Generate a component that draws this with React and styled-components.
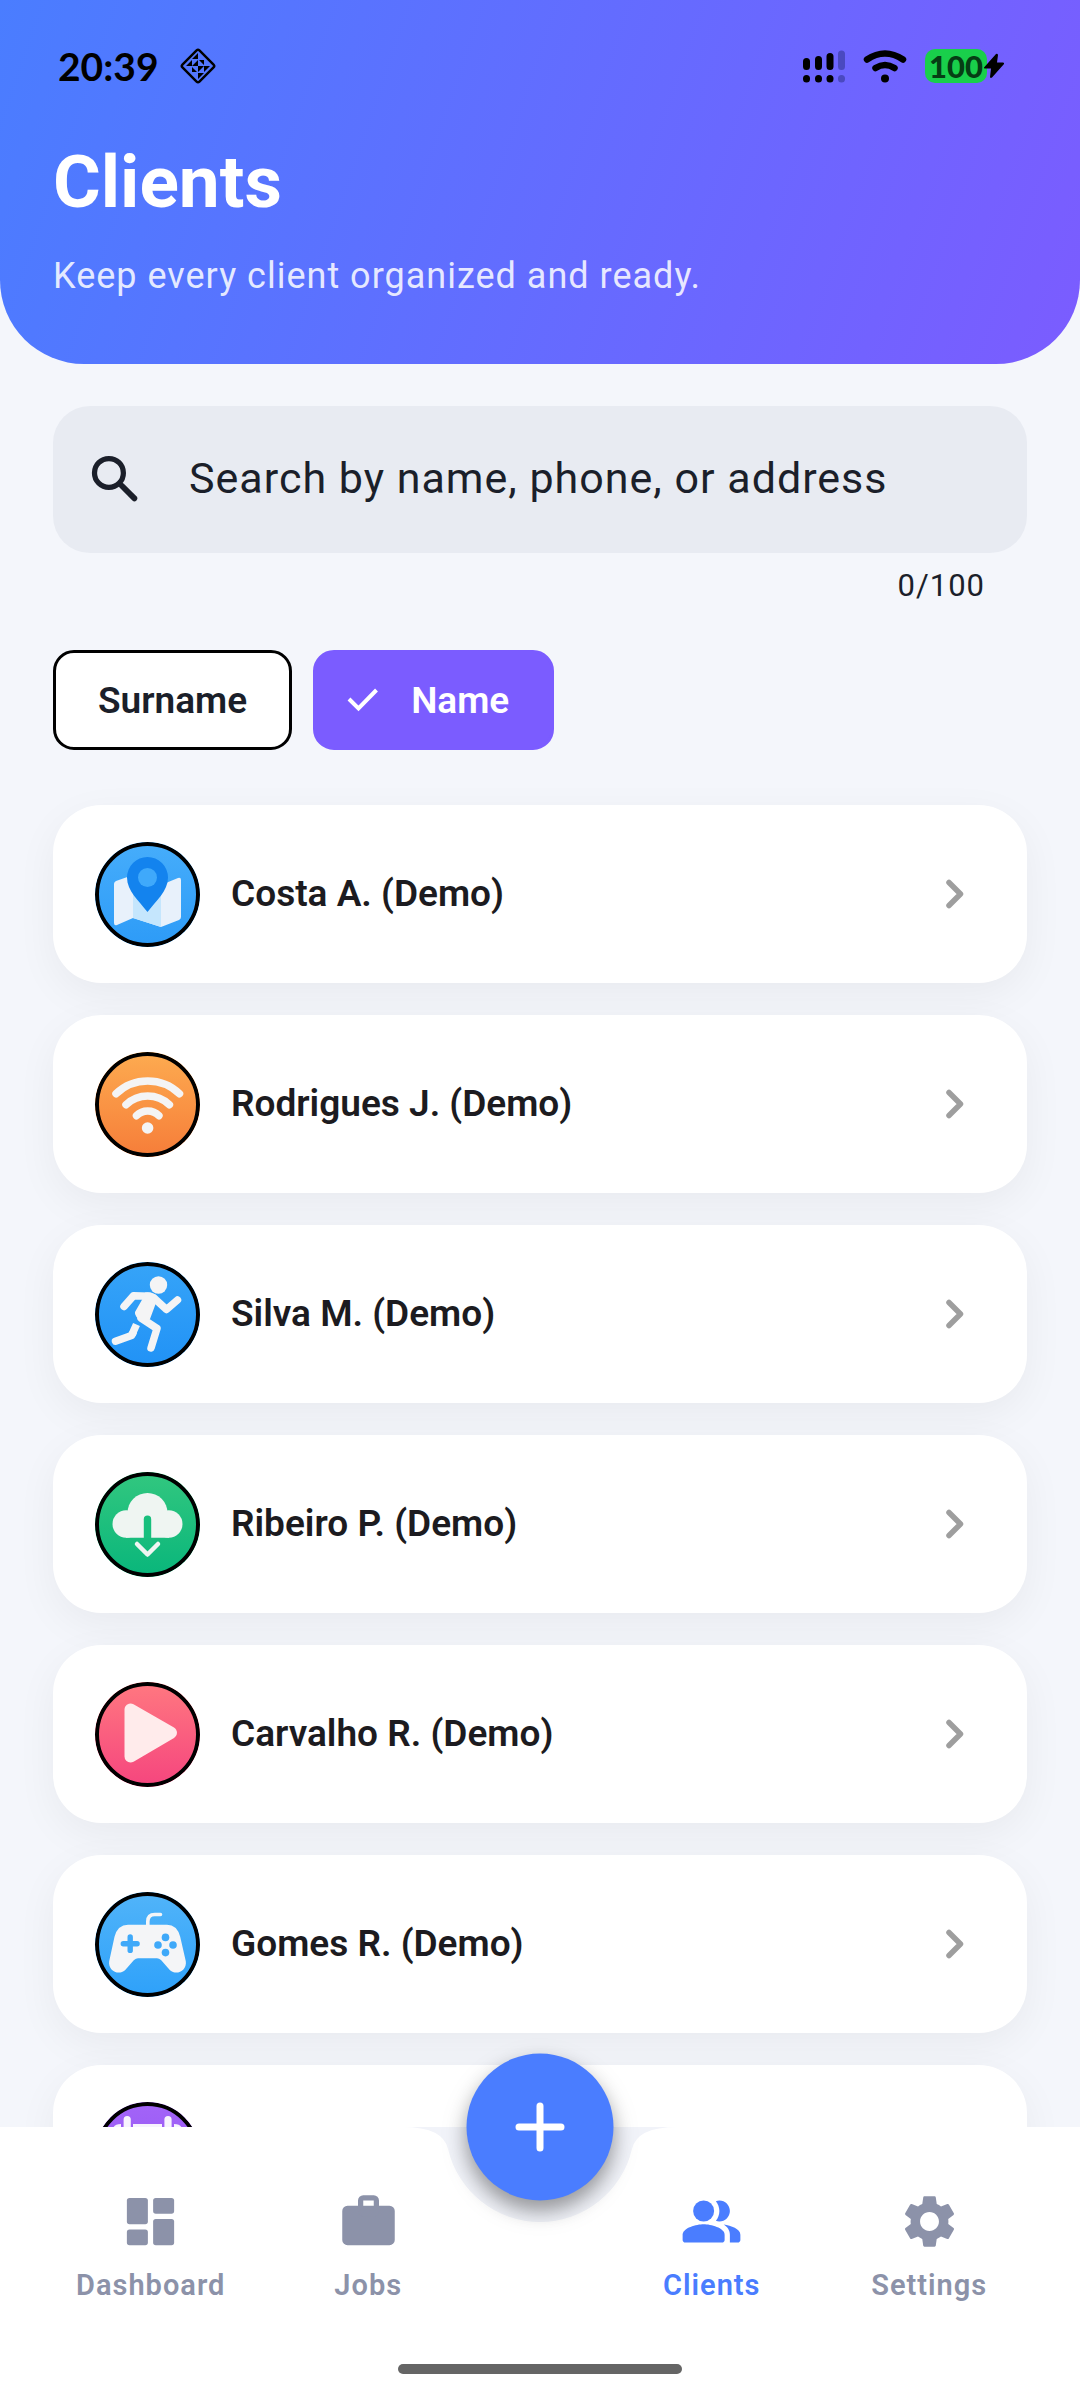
import React, { useState } from 'react'
import styled, { createGlobalStyle } from 'styled-components'
import { MdSettings } from 'react-icons/md'

const clients = [
    { id: 1, name: 'Costa A. (Demo)', icon: 'map', from: '#46adfb', to: '#2d9bf7' },
    { id: 2, name: 'Rodrigues J. (Demo)', icon: 'wifi', from: '#fdab50', to: '#f67d39' },
    { id: 3, name: 'Silva M. (Demo)', icon: 'runner', from: '#36a4f8', to: '#2192f6' },
    { id: 4, name: 'Ribeiro P. (Demo)', icon: 'cloud', from: '#32c77f', to: '#09b67b' },
    { id: 5, name: 'Carvalho R. (Demo)', icon: 'play', from: '#ff7880', to: '#f5457e' },
    { id: 6, name: 'Gomes R. (Demo)', icon: 'gamepad', from: '#51b4f9', to: '#2ea1fa' },
    { id: 7, name: '', icon: 'calendar', from: '#a364f8', to: '#8f50f0' },
]

// All avatar glyphs share a 105 x 105 grid
const glyphs = {
    map: (
        <>
            <path fill="#e8f1fb" d="M38 33 21 39q-2 1-2 3v39q0 3 3 2l16-7 28 9 18-7q2-1 2-3V38q0-3-3-2l-17 7z" />
            <path fill="#c5e6fd" d="M38 40h28v45l-28-9z" />
            <path fill="#1383ee" d="M52.500 15a20.500 20.500 0 0 0-20.500 20.500C32 49 44 59 52.500 70 61 59 73 49 73 35.500A20.500 20.500 0 0 0 52.500 15z" />
            <circle cx="52.500" cy="35.500" r="9.500" fill="#3fa9fb" />
        </>
    ),
    wifi: (
        <>
            <g fill="none" stroke="#f4f4f5" strokeWidth="7.500" strokeLinecap="round">
                <path d="M21 41.700a46 46 0 0 1 63.500 0" />
                <path d="M31 52.700a31.400 31.400 0 0 1 43.400 0" />
                <path d="M41.500 63.700a15.500 15.500 0 0 1 22.400 0" />
            </g>
            <circle cx="52.600" cy="76" r="5.800" fill="#f4f4f5" />
        </>
    ),
    runner: (
        <>
            <circle cx="63.500" cy="23" r="8.700" fill="#f4f4f5" />
            <g fill="none" stroke="#f4f4f5" strokeWidth="7.500" strokeLinejoin="round">
                <path strokeLinecap="round" d="M29 44.500 38.500 33.700 54 34.200M59 36l12.500 11.500L82.500 38" />
                <path strokeLinecap="round" d="M46 56l16 10.500L56 86" />
                <path d="M41.500 62.500 37 72.500" />
                <path strokeLinecap="round" d="M20.500 79.200 36.500 73.500 38 71" />
            </g>
            <path fill="#f4f4f5" d="M50 30.500q9-1 13 5L55 57l-8 1q-8-3-7-8l8-14z" />
        </>
    ),
    cloud: (
        <>
            <g fill="#eff5f2">
                <circle cx="31.200" cy="52" r="13.700" />
                <circle cx="73.800" cy="52" r="13.700" />
                <circle cx="52.500" cy="41" r="20" />
                <path d="M31 40h43v25.700H31z" />
            </g>
            <path fill="#18bf7d" d="M48.800 66V47.200a3.700 3.700 0 0 1 7.400 0V66z" />
            <path fill="none" stroke="#eff5f2" strokeWidth="4.500" strokeLinecap="round" strokeLinejoin="round" d="m42 72 10.500 10.500L63 72" />
        </>
    ),
    play: (
        <path fill="#ffebeb" stroke="#ffebeb" strokeWidth="12" strokeLinejoin="round" d="M35.500 27.500v47l40.500-23.700z" />
    ),
    gamepad: (
        <>
            <path fill="none" stroke="#f4f5f7" strokeWidth="3.600" strokeLinecap="round" d="M52.800 34v-4.500q0-7 7-7h5.700" />
            <path fill="#f4f5f7" d="M33 32.700h39q10 0 13.200 12l5.600 24.500c1.400 9-9 15-15.800 9L66 68q-2-1.700-4-1.700H43q-2 0-4 1.700l-9 10.200c-6.800 6-17.200 0-15.800-9L19.500 44.700q3.200-12 13.500-12z" />
            <path fill="none" stroke="#3fa9f9" strokeWidth="5.400" strokeLinecap="round" d="M35.200 45v13.400M28.300 51.700h13.800" />
            <g fill="#3fa9f9">
                <circle cx="70.500" cy="45.400" r="3.800" />
                <circle cx="63" cy="53" r="3.800" />
                <circle cx="78" cy="53" r="3.800" />
                <circle cx="70.500" cy="60.600" r="3.800" />
            </g>
        </>
    ),
    calendar: (
        <>
            <path fill="#f7f3fd" d="M18 28q0-6 8-6v14q6 6 12 0V22h29v14q6 6 12 0V22q8 0 8 6v52q0 6-6 6H24q-6 0-6-6z" />
            <path fill="none" stroke="#f7f3fd" strokeWidth="7.200" strokeLinecap="round" d="M32.200 17.500V32M73 17.500V32" />
        </>
    ),
}

const SearchIcon = () => (
    <svg width="63" height="63" viewBox="0 0 24 24" fill="none" stroke="#1b1f2a" strokeWidth="2" aria-hidden="true">
        <circle cx="9.500" cy="9.500" r="5.500" />
        <path d="m14.400 14.400 4.800 4.800" strokeLinecap="round" strokeWidth="2.200" />
    </svg>
)

const DashboardIcon = () => (
    <svg width="63" height="63" viewBox="0 0 24 24" fill="currentColor" aria-hidden="true">
        <rect x="3" y="3" width="8" height="10" rx="1" />
        <rect x="3" y="15" width="8" height="6" rx="1" />
        <rect x="13" y="3" width="8" height="6" rx="1" />
        <rect x="13" y="11" width="8" height="10" rx="1" />
    </svg>
)

const JobsIcon = () => (
    <svg width="63" height="63" viewBox="0 0 24 24" fill="currentColor" aria-hidden="true">
        <rect x="2" y="6" width="20" height="15" rx="2" />
        <rect x="9" y="3" width="6" height="6" rx="1" fill="none" stroke="currentColor" strokeWidth="2" />
    </svg>
)

const PeopleIcon = () => (
    <svg width="63" height="63" viewBox="0 0 24 24" fill="currentColor" aria-hidden="true">
        <circle cx="9" cy="8" r="4" />
        <path d="M9 13c-2.670 0-8 1.340-8 4v2c0 .55.45 1 1 1h14c.55 0 1-.45 1-1v-2c0-2.660-5.330-4-8-4z" />
        <path d="M15 12c2.210 0 4-1.790 4-4s-1.790-4-4-4c-.47 0-.91.1-1.330.24C14.500 5.270 15 6.580 15 8s-.5 2.730-1.330 3.760c.42.14.86.24 1.330.24z" />
        <path d="M16.670 13.130C18.040 14.060 19 15.320 19 17v3h3c.55 0 1-.45 1-1v-2c0-2.180-3.570-3.470-6.330-3.870z" />
    </svg>
)

const tabs = [
    { label: 'Dashboard', icon: <DashboardIcon /> },
    { label: 'Jobs', icon: <JobsIcon /> },
    { label: 'Clients', icon: <PeopleIcon />, active: true },
    { label: 'Settings', icon: <MdSettings size={63} aria-hidden="true" /> },
]

const StatusBar = () => (
    <StatusRow>
        <Clock>20:39</Clock>
        <svg width="38" height="38" viewBox="-19 -19 38 38" aria-hidden="true">
            <rect x="-12" y="-12" width="24" height="24" rx="2" transform="rotate(45)" fill="none" stroke="#000" strokeWidth="2.400" />
            <path d="M0-13v6h-6zM-12 0l6-6v6zM0 0h-6l6-6zM1-6h5v5zM0 13V7h6zM12 0 6 6V0zM0 0h6L0 6zM-1 6h-5V1z" />
        </svg>
        <StatusIcons>
            <svg width="42" height="33" viewBox="0 0 42 33" strokeWidth="7" strokeLinecap="round" stroke="#000" aria-hidden="true">
                <path d="M3.500 11.500v5M15.500 9.500v7M27 6.500v10M3.500 28.500v.5M15.500 28.500v.5M27 28.500v.5" />
                <path stroke="#4a49c0" d="M38.500 4v12.500M38.500 28.500v.5" />
            </svg>
            <svg width="44" height="33" viewBox="0 0 44 33" strokeLinecap="round" fill="none" stroke="#000" strokeWidth="6.500" aria-hidden="true">
                <path d="M4 9.500q18-12 36 0M12.500 18q9.500-6 19 0" />
                <circle cx="22" cy="28.500" r="4" fill="#000" stroke="none" />
            </svg>
            <Battery>
                <BatteryLevel>100</BatteryLevel>
                <svg width="22" height="26" viewBox="0 0 22 26" aria-hidden="true">
                    <path d="M13 1 1 14.500q-.5 1 1 1h6L7 24q.5 1.500 2 .5l12-13.500q.5-1.500-1-1.500h-6L15 2q-.5-2-2-1z" />
                </svg>
            </Battery>
        </StatusIcons>
    </StatusRow>
)

const ClientCard = ({ client }) => (
    <li>
        <Card href="#client">
            <Avatar $from={client.from} $to={client.to}>
                <svg width="105" height="105" viewBox="0 0 105 105" aria-hidden="true">{glyphs[client.icon]}</svg>
            </Avatar>
            <ClientName>{client.name}</ClientName>
            <svg width="63" height="63" viewBox="0 0 63 63" fill="none" stroke="#9e9e9e" strokeWidth="5.500" strokeLinecap="round" strokeLinejoin="round" aria-hidden="true">
                <path d="m27 19.500 11.500 11.500L27 42.500" />
            </svg>
        </Card>
    </li>
)

const App = () => {
    const [query, setQuery] = useState('')
    const [sort, setSort] = useState('name')

    return (
        <Screen>
            <GlobalStyle />
            <Header>
                <StatusBar />
                <Title>Clients</Title>
                <Subtitle>Keep every client organized and ready.</Subtitle>
            </Header>

            <Content>
                <SearchBox>
                    <SearchIcon />
                    <input
                        type="text"
                        aria-label="Search clients"
                        placeholder="Search by name, phone, or address"
                        maxLength={100}
                        value={query}
                        onChange={(e) => setQuery(e.target.value)}
                    />
                </SearchBox>
                <Counter>{query.length}/100</Counter>

                <Chips>
                    <Chip type="button" aria-pressed={sort === 'surname'} $selected={sort === 'surname'} onClick={() => setSort('surname')}>
                        {sort === 'surname' && <Tick />}
                        Surname
                    </Chip>
                    <Chip type="button" aria-pressed={sort === 'name'} $selected={sort === 'name'} onClick={() => setSort('name')}>
                        {sort === 'name' && <Tick />}
                        Name
                    </Chip>
                </Chips>

                <List>
                    {clients.map((client) => (
                        <ClientCard key={client.id} client={client} />
                    ))}
                </List>
            </Content>

            <BottomBar>
                <Notch width="274" height="96" viewBox="-137 0 274 96" aria-hidden="true">
                    <path d="M-137 0Q-97 0-92 22A94.500 94.500 0 0 0 92 22Q97 0 137 0z" />
                </Notch>
                <AddButton type="button" aria-label="Add client">
                    <svg width="63" height="63" viewBox="0 0 63 63" stroke="#fff" strokeWidth="7" strokeLinecap="round" aria-hidden="true">
                        <path d="M31.500 10.500v42M10.500 31.500h42" />
                    </svg>
                </AddButton>
                <Tabs>
                    {tabs.map((tab) => (
                        <Tab key={tab.label} href="#tab" $active={tab.active} aria-current={tab.active ? 'page' : undefined}>
                            {tab.icon}
                            <span>{tab.label}</span>
                        </Tab>
                    ))}
                </Tabs>
                <HomeIndicator />
            </BottomBar>
        </Screen>
    )
}

const Tick = () => (
    <svg width="42" height="42" viewBox="0 0 42 42" fill="none" stroke="#fff" strokeWidth="4" aria-hidden="true">
        <path d="m7 20 9.500 9.500L34.500 11" />
    </svg>
)

const GlobalStyle = createGlobalStyle`
    *{
        box-sizing: border-box;
        margin: 0;
        padding: 0;
    }

    body{
        background-color: #f4f6fb;
        font-family: Roboto, "Liberation Sans", sans-serif;
        color: #1b1f2a;
    }
`;

const Screen = styled.div`
    display: flex;
    flex-direction: column;
    height: 100vh;
    overflow: hidden;
`;

const Header = styled.header`
    flex-shrink: 0;
    padding: 46px 53px 62px;
    border-radius: 0 0 84px 84px;
    background: linear-gradient(109deg, #4a7dff, #7b5cff);
    color: #fff;
`;

const StatusRow = styled.div`
    display: flex;
    align-items: center;
    gap: 20px;
    height: 40px;
    margin-bottom: 52px;
    padding: 0 22px 0 5px;
    color: #000;
`;

const Clock = styled.span`
    font-family: Lato, sans-serif;
    font-size: 39px;
    font-weight: 700;
    line-height: 40px;
`;

const StatusIcons = styled.div`
    display: flex;
    align-items: center;
    gap: 18px;
    margin-left: auto;
`;

const Battery = styled.div`
    display: flex;
    align-items: center;

    svg{
        margin-left: -4px;
    }
`;

const BatteryLevel = styled.span`
    padding: 0 4px;
    border-radius: 10px;
    background-color: #19cf4b;
    color: #063d14;
    font-family: Lato, sans-serif;
    font-size: 31px;
    font-weight: 900;
    line-height: 34px;
`;

const Title = styled.h1`
    margin-bottom: 24px;
    font-size: 73px;
    font-weight: 700;
    line-height: 88px;
`;

const Subtitle = styled.p`
    color: rgba(255, 255, 255, 0.85);
    font-size: 36px;
    line-height: 52px;
    letter-spacing: 1px;
`;

const Content = styled.main`
    flex: 1;
    min-height: 0;
    padding: 42px 53px 0;
    overflow: hidden;
`;

const SearchBox = styled.label`
    display: flex;
    align-items: center;
    gap: 42px;
    height: 147px;
    padding: 0 31px;
    border-radius: 37px;
    background-color: #e8ebf2;

    svg{
        flex-shrink: 0;
    }

    input{
        flex: 1;
        min-width: 0;
        padding-bottom: 3px;
        border: none;
        outline: none;
        background: transparent;
        color: #1b1f2a;
        font-family: inherit;
        font-size: 43px;
        letter-spacing: 1px;

        &::placeholder{
            color: #1b1f2a;
            opacity: 1;
        }
    }
`;

const Counter = styled.p`
    margin-top: 12px;
    padding-right: 42px;
    font-size: 31px;
    line-height: 42px;
    letter-spacing: 1px;
    text-align: right;
`;

const Chips = styled.div`
    display: flex;
    gap: 21px;
    margin-top: 43px;
`;

const Chip = styled.button`
    display: flex;
    align-items: center;
    gap: 27px;
    height: 100px;
    padding: ${({ $selected }) => ($selected ? '0 42px 0 26px' : '0 42px')};
    border: 3px solid ${({ $selected }) => ($selected ? '#7b5cff' : '#000')};
    border-radius: 21px;
    background-color: ${({ $selected }) => ($selected ? '#7b5cff' : '#fff')};
    color: ${({ $selected }) => ($selected ? '#fff' : '#1b1f2a')};
    font-family: inherit;
    font-size: 37px;
    font-weight: 600;
    cursor: pointer;
`;

const List = styled.ul`
    display: flex;
    flex-direction: column;
    gap: 32px;
    margin-top: 55px;
    list-style: none;
`;

const Card = styled.a`
    display: flex;
    align-items: center;
    height: 178px;
    padding: 0 42px;
    border-radius: 48px;
    background-color: #fff;
    box-shadow: 0 12px 42px rgba(0, 0, 0, 0.05);
    color: #1c1b20;
    text-decoration: none;
`;

const Avatar = styled.div`
    position: relative;
    width: 105px;
    height: 105px;
    border-radius: 50%;
    background: linear-gradient(${({ $from }) => $from}, ${({ $to }) => $to});
    overflow: hidden;

    svg{
        display: block;
    }

    &::after{
        content: "";
        position: absolute;
        inset: 0;
        border: 4px solid #000;
        border-radius: 50%;
    }
`;

const ClientName = styled.span`
    flex: 1;
    margin-left: 31px;
    font-size: 37px;
    font-weight: 600;
    line-height: 52px;
`;

const BottomBar = styled.footer`
    position: relative;
    flex-shrink: 0;
    padding: 63px 42px 26px;
    background-color: #fff;
`;

const Notch = styled.svg`
    position: absolute;
    top: 0;
    left: 50%;
    transform: translateX(-50%);
    fill: #f1f3f9;
`;

const AddButton = styled.button`
    position: absolute;
    top: 0;
    left: 50%;
    display: flex;
    align-items: center;
    justify-content: center;
    width: 147px;
    height: 147px;
    border: none;
    border-radius: 50%;
    background-color: #4a7dff;
    box-shadow: 0 10px 18px rgba(0, 0, 0, 0.3), 0 10px 30px rgba(0, 0, 0, 0.12);
    transform: translate(-50%, -50%);
    cursor: pointer;
`;

const Tabs = styled.nav`
    display: grid;
    grid-template-columns: 1fr 1fr 126px 1fr 1fr;
`;

const Tab = styled.a`
    display: flex;
    flex-direction: column;
    align-items: center;
    gap: 11px;
    color: ${({ $active }) => ($active ? '#4a7dff' : '#8c92a9')};
    font-size: 29px;
    font-weight: 600;
    line-height: 42px;
    letter-spacing: 1px;
    text-decoration: none;

    /* leaves the middle column free under the add button */
    &:nth-child(3){
        grid-column: 4;
    }
`;

const HomeIndicator = styled.div`
    width: 284px;
    height: 10px;
    margin: 58px auto 0;
    border-radius: 5px;
    background-color: #656565;
`;

export default App
